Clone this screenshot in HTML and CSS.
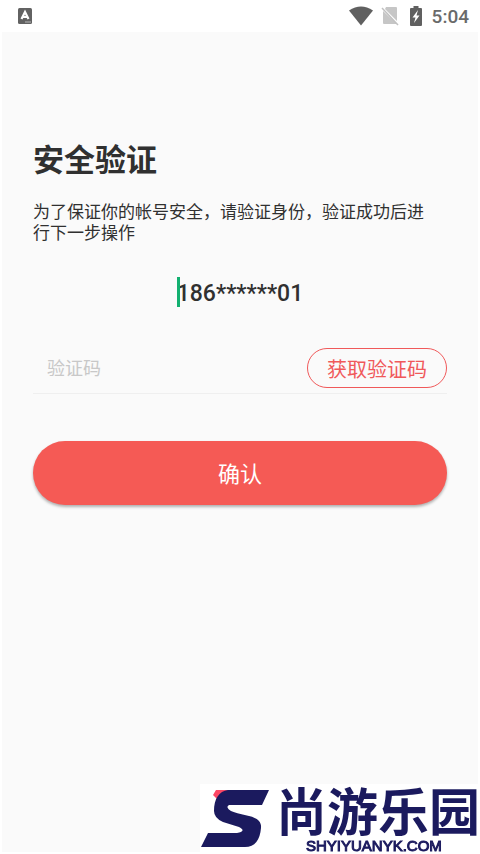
FILE: index.html
```html
<!DOCTYPE html>
<html lang="zh-CN">
<head>
<meta charset="utf-8">
<meta name="viewport" content="width=device-width, initial-scale=1">
<title>安全验证</title>
<link rel="stylesheet" href="styles.css">
</head>
<body>
<header class="status">
  <svg class="status-app" viewBox="0 0 16 16" aria-hidden="true">
    <rect x="1" y="0" width="14" height="16" rx="1.5" fill="#626262"/>
    <path d="M4.500 11 8 4l3.500 7M6 9h4" fill="none" stroke="#fff" stroke-width="2.200"/>
    <path d="M8 14h6" stroke="#aaa" stroke-width="1.200"/>
  </svg>
  <div class="status-right">
    <svg class="wifi" viewBox="0 0 24 20" aria-hidden="true"><path d="M0 4.500Q12-3.500 24 4.500L12 19.500Z" fill="#606060"/></svg>
    <svg class="sim" viewBox="0 0 18 20" aria-hidden="true">
      <path d="M5 1h10q1 0 1 1v13L4 3ZM2 5l14 13H3q-1 0-1-1Z" fill="#c6c6c6"/>
      <path d="M1 2 17 19" stroke="#c0c0c0" stroke-width="1.500"/>
    </svg>
    <svg class="battery" viewBox="0 0 12 20" aria-hidden="true">
      <path d="M3.500 0h5v2H11q1 0 1 1v16q0 1-1 1H1q-1 0-1-1V3q0-1 1-1h2.500Z" fill="#606060"/>
      <path d="M8 4 2.500 11.500h3L4 17 9.500 9.500h-3Z" fill="#fff"/>
    </svg>
    <span class="time">5:04</span>
  </div>
</header>
<main class="screen">
  <h1 class="title">安全验证</h1>
  <p class="intro">为了保证你的帐号安全，请验证身份，验证成功后进行下一步操作</p>
  <p class="phone"><span class="phone-number">186******01<i class="caret"></i></span></p>
  <form class="form">
    <div class="code-row">
      <input class="code" type="text" placeholder="验证码" aria-label="验证码">
      <button class="get-code" type="button">获取验证码</button>
    </div>
    <button class="confirm" type="submit">确认</button>
  </form>
</main>
<aside class="brand">
  <svg class="brand-mark" viewBox="0 0 68 58" aria-hidden="true">
    <path d="M15 0H30L16 9 12 5Z" fill="#fb4664"/>
    <path d="M27 0H68L61 15H28Q24 17 30 21Q34 23 48 26Q61 29 60 38C59 50 54 57 44 57H0L7 43H36Q46 41 38 37L22 32Q13 28 13 21C13 9 18 1 27 0Z" fill="#1b1a5e"/>
  </svg>
  <div class="brand-words">
    <span class="brand-name">尚游乐园</span>
    <span class="brand-url">SHYIYUANYK.COM</span>
  </div>
</aside>
</body>
</html>
```
FILE: styles.css
```css
* { box-sizing: border-box; }

body {
  margin: 0;
  min-height: 100vh;
  padding: 0 2px 2px;
  display: flex;
  flex-direction: column;
  background: #fff;
  color: #303030;
  font-family: Roboto, "Noto Sans CJK SC", sans-serif;
}

button, input { font: inherit; }

.status {
  display: flex;
  align-items: center;
  justify-content: space-between;
  height: 32px;
  padding: 0 9px 0 15px;
}
.status-app { width: 16px; height: 16px; }
.status-right { display: flex; align-items: center; }
.wifi { width: 24px; height: 20px; margin-right: 8px; }
.sim { width: 18px; height: 20px; margin-right: 11px; }
.battery { width: 12px; height: 20px; margin-right: 10px; }
.time { font-size: 19px; font-weight: 500; color: #6a6a6a; }

.screen {
  flex: 1;
  padding: 105px 31px 0;
  background: #fafafa;
}
.title {
  margin: 0;
  font-size: 31px;
  line-height: 48px;
  font-weight: 700;
}
.intro {
  margin: 17px 0 0;
  padding-right: 14px;
  font-size: 17px;
  line-height: 21px;
}
.phone {
  margin: 34px 0 0;
  text-align: center;
  font-size: 23px;
  line-height: 32px;
  font-weight: 500;
}
.phone-number { position: relative; }
.caret {
  position: absolute;
  left: 0;
  top: -3px;
  width: 3px;
  height: 30px;
  background: #12b070;
}

.code-row {
  display: flex;
  align-items: center;
  margin-top: 38px;
  padding-bottom: 5px;
  border-bottom: 1px solid #efefef;
}
.code {
  flex: 1;
  min-width: 0;
  height: 40px;
  padding: 0 14px;
  border: 0;
  outline: 0;
  background: transparent;
  font-size: 18px;
}
.code::placeholder { color: #c8c8c8; opacity: 1; }
.get-code {
  width: 140px;
  height: 40px;
  padding: 0;
  border: 1px solid #f0595a;
  border-radius: 20px;
  background: transparent;
  color: #f0595a;
  font-size: 20px;
}
.confirm {
  display: block;
  width: 100%;
  height: 64px;
  margin-top: 47px;
  padding: 0 0 2px;
  border: 0;
  border-radius: 32px;
  background: #f55a55;
  box-shadow: 0 2px 3px rgba(0, 0, 0, 0.3);
  color: #fff;
  font-size: 22px;
}

.brand {
  position: fixed;
  right: 0;
  bottom: 0;
  display: flex;
  align-items: center;
  height: 70px;
  padding-left: 1px;
  background: #fff;
  color: #1b1a5e;
}
.brand-mark { width: 68px; height: 58px; margin-right: 7px; }
.brand-words {
  display: flex;
  flex-direction: column;
  gap: 6px;
}
.brand-name {
  font-family: "Noto Sans CJK SC", sans-serif;
  font-size: 51px;
  line-height: 48px;
  font-weight: 700;
}
.brand-url {
  padding-left: 30px;
  font-family: "Liberation Sans", sans-serif;
  font-size: 15px;
  line-height: 14px;
  -webkit-text-stroke: 1px #1b1a5e;
}
```
